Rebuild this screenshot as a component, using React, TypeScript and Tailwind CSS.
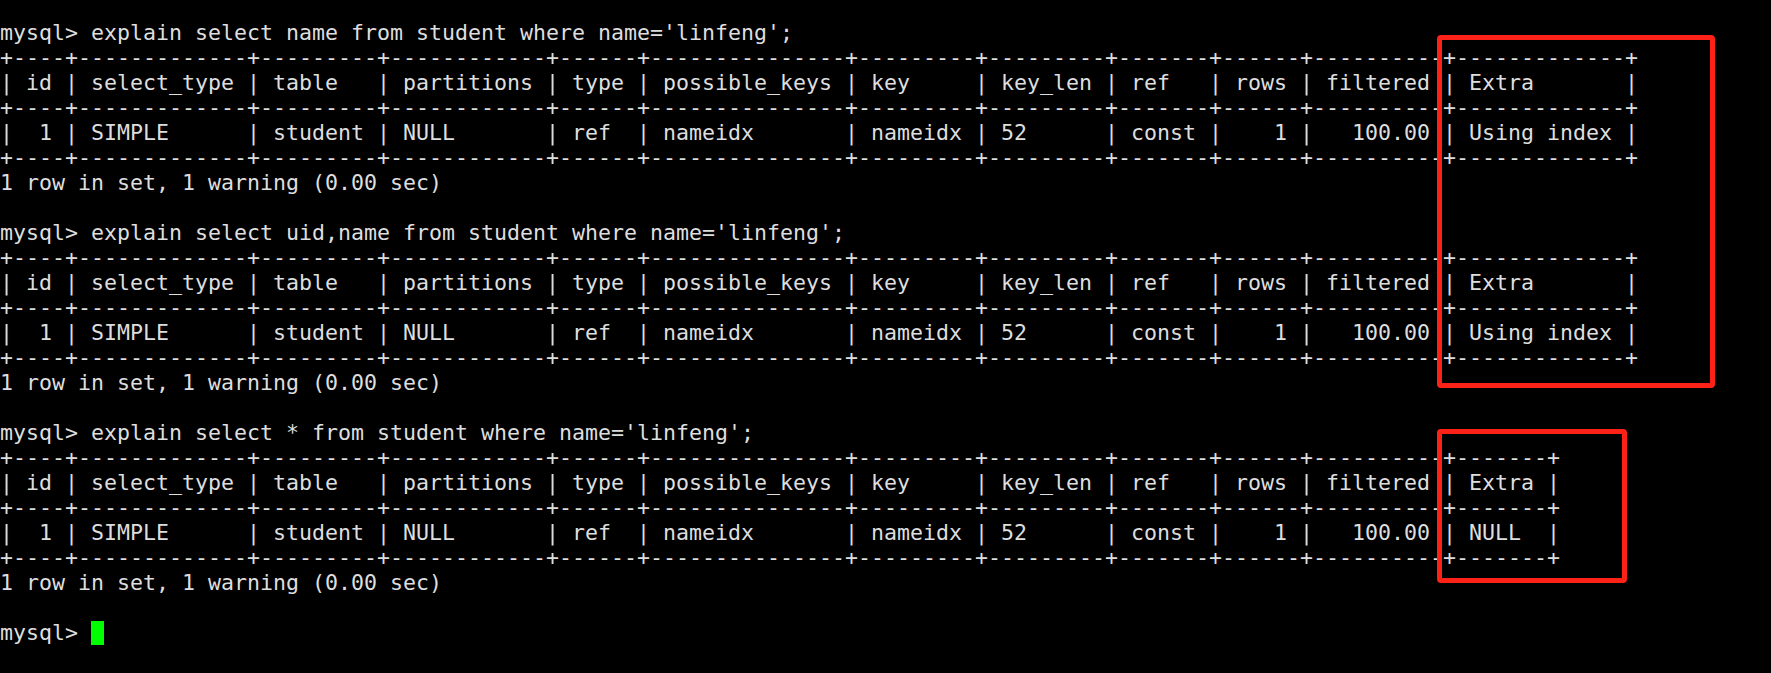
import React from 'react'

type Cell = { text: string; right?: boolean }

const cols = ['id', 'select_type', 'table', 'partitions', 'type', 'possible_keys', 'key', 'key_len', 'ref', 'rows', 'filtered', 'Extra']

const buildTable = (extra: string) => {
   const row: Cell[] = [
      { text: '1', right: true },
      { text: 'SIMPLE' },
      { text: 'student' },
      { text: 'NULL' },
      { text: 'ref' },
      { text: 'nameidx' },
      { text: 'nameidx' },
      { text: '52' },
      { text: 'const' },
      { text: '1', right: true },
      { text: '100.00', right: true },
      { text: extra },
   ]
   const widths = cols.map((c, i) => Math.max(c.length, row[i].text.length))
   const sep = '+' + widths.map((w) => '-'.repeat(w + 2)).join('+') + '+'
   const head = '|' + cols.map((c, i) => ' ' + c.padEnd(widths[i]) + ' ').join('|') + '|'
   const body =
      '|' +
      row
         .map((c, i) => ' ' + (c.right ? c.text.padStart(widths[i]) : c.text.padEnd(widths[i])) + ' ')
         .join('|') +
      '|'
   return [sep, head, sep, body, sep]
}

const queries = [
   { sql: "explain select name from student where name='linfeng';", extra: 'Using index' },
   { sql: "explain select uid,name from student where name='linfeng';", extra: 'Using index' },
   { sql: "explain select * from student where name='linfeng';", extra: 'NULL' },
]

const App = () => {
   const lines: string[] = []
   queries.forEach((q) => {
      lines.push('mysql> ' + q.sql)
      lines.push(...buildTable(q.extra))
      lines.push('1 row in set, 1 warning (0.00 sec)')
      lines.push('')
   })

   return (
      <div className="relative w-full h-[673px] bg-black overflow-hidden">
         <div
            className="pt-[20px] text-[#dedede] text-[21.6px] leading-[25px] whitespace-pre"
            style={{ fontFamily: '"DejaVu Sans Mono", "Liberation Mono", monospace' }}
         >
            {lines.map((l, i) => (
               <div key={i} className="h-[25px]">
                  {l}
               </div>
            ))}
            <div className="h-[25px] flex items-center">
               <span>mysql&gt; </span>
               <span className="inline-block w-[13px] h-[24px] bg-[#00ff00]"></span>
            </div>
         </div>

         {/* red annotation boxes */}
         <div className="absolute left-[1437px] top-[35px] w-[278px] h-[353px] border-[5px] border-[#fc2218] rounded-[4px]"></div>
         <div className="absolute left-[1437px] top-[429px] w-[190px] h-[154px] border-[5px] border-[#fc2218] rounded-[4px]"></div>
      </div>
   )
}

export default App
